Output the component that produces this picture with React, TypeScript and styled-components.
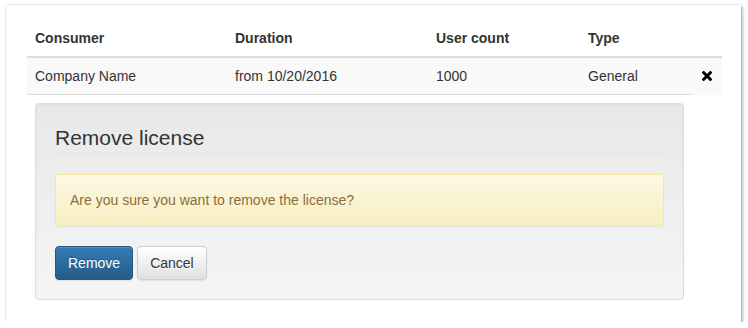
import React from "react";
import styled, { createGlobalStyle } from "styled-components";

const GlobalStyle = createGlobalStyle`
  html, body { margin: 0; padding: 0; background: #ffffff; }
  body {
    font-family: "Liberation Sans", Arial, Helvetica, sans-serif;
    font-size: 14px;
    line-height: 20px;
    color: #333333;
  }
  * { box-sizing: border-box; }
`;

const Page = styled.div`
  padding: 5px 0 0 6px;
`;

const Card = styled.div`
  width: 735px;
  height: 317px;
  background: #ffffff;
  padding: 15px 19px 14px 21px;
  box-shadow: 0 0 2px rgba(0, 0, 0, 0.22), 2px 2px 3px rgba(0, 0, 0, 0.25);
`;

const Table = styled.table`
  width: 695px;
  border-collapse: collapse;
  border-spacing: 0;
  table-layout: fixed;
`;

const HeadCell = styled.th<{ $w: number }>`
  width: ${(p) => p.$w}px;
  padding: 8px;
  text-align: left;
  font-weight: bold;
  line-height: 20px;
  border-bottom: 2px solid #dddddd;
`;

const Row = styled.tr<{ $striped?: boolean }>`
  background: ${(p) => (p.$striped ? "#f9f9f9" : "transparent")};
`;

const Cell = styled.td<{ $border?: boolean; $center?: boolean }>`
  padding: 8px;
  line-height: 20px;
  vertical-align: top;
  text-align: ${(p) => (p.$center ? "center" : "left")};
  border-top: ${(p) => (p.$border ? "1px solid #dddddd" : "none")};
`;

const IconWrap = styled.span`
  display: inline-flex;
  align-items: center;
  justify-content: center;
  height: 20px;
`;

const Well = styled.div`
  padding: 19px;
  border: 1px solid #dcdcdc;
  border-radius: 4px;
  background-image: linear-gradient(to bottom, #e8e8e8 0%, #f5f5f5 100%);
  box-shadow: inset 0 1px 3px rgba(0, 0, 0, 0.05), 0 1px 0 rgba(255, 255, 255, 0.1);
`;

const Legend = styled.div`
  font-size: 21px;
  line-height: 30px;
  color: #333333;
  border-bottom: 1px solid #e2e2e2;
  margin-bottom: 20px;
`;

const Alert = styled.div`
  padding: 15px 14px;
  border: 1px solid #f5e79e;
  border-radius: 4px;
  color: #8a6d3b;
  background-image: linear-gradient(to bottom, #fcf8e3 0%, #f8efc0 100%);
  box-shadow: inset 0 1px 0 rgba(255, 255, 255, 0.25), 0 1px 2px rgba(0, 0, 0, 0.05);
  text-shadow: 0 1px 0 rgba(255, 255, 255, 0.2);
  margin-bottom: 20px;
`;

const Buttons = styled.div`
  display: flex;
  gap: 4px;
`;

const Button = styled.button<{ $primary?: boolean }>`
  font-family: inherit;
  font-size: 14px;
  line-height: 20px;
  padding: 6px 12px;
  border-radius: 4px;
  cursor: pointer;
  border: 1px solid ${(p) => (p.$primary ? "#245580" : "#cccccc")};
  color: ${(p) => (p.$primary ? "#ffffff" : "#333333")};
  background-image: ${(p) =>
    p.$primary
      ? "linear-gradient(to bottom, #337ab7 0%, #265a88 100%)"
      : "linear-gradient(to bottom, #ffffff 0%, #e0e0e0 100%)"};
  text-shadow: ${(p) =>
    p.$primary ? "0 -1px 0 rgba(0,0,0,0.2)" : "0 1px 0 #ffffff"};
  box-shadow: inset 0 1px 0 rgba(255, 255, 255, 0.15), 0 1px 1px rgba(0, 0, 0, 0.075);
`;

const RemoveIcon = () => (
  <svg width="10" height="10" viewBox="0 0 10 10" aria-hidden="true">
    <path
      d="M1.6 1.6 L8.4 8.4 M8.4 1.6 L1.6 8.4"
      stroke="#000000"
      strokeWidth="2.9"
      strokeLinecap="square"
      fill="none"
    />
  </svg>
);

export default function App() {
  return (
    <>
      <GlobalStyle />
      <Page>
        <Card>
          <Table>
            <thead>
              <tr>
                <HeadCell $w={200}>Consumer</HeadCell>
                <HeadCell $w={201}>Duration</HeadCell>
                <HeadCell $w={152}>User count</HeadCell>
                <HeadCell $w={112}>Type</HeadCell>
                <HeadCell $w={30}></HeadCell>
              </tr>
            </thead>
            <tbody>
              <Row $striped>
                <Cell>Company Name</Cell>
                <Cell>from 10/20/2016</Cell>
                <Cell>1000</Cell>
                <Cell>General</Cell>
                <Cell $center>
                  <IconWrap>
                    <RemoveIcon />
                  </IconWrap>
                </Cell>
              </Row>
              <Row>
                <Cell colSpan={4} $border>
                  <Well>
                    <Legend>Remove license</Legend>
                    <Alert>Are you sure you want to remove the license?</Alert>
                    <Buttons>
                      <Button $primary>Remove</Button>
                      <Button>Cancel</Button>
                    </Buttons>
                  </Well>
                </Cell>
                <Cell></Cell>
              </Row>
            </tbody>
          </Table>
        </Card>
      </Page>
    </>
  );
}
